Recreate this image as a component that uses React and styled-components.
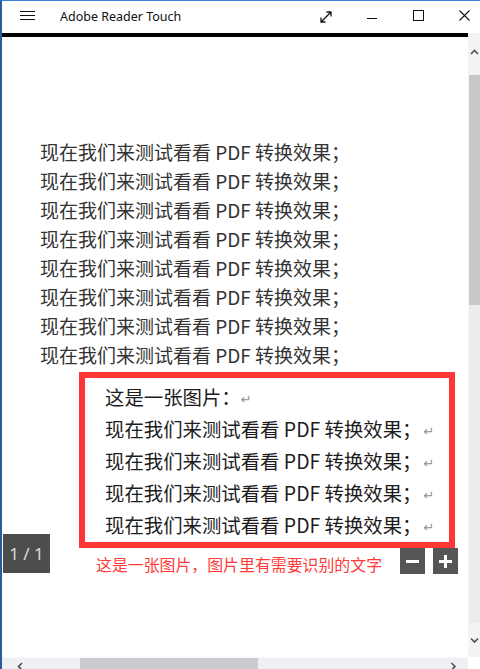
import React from 'react';
import styled, { createGlobalStyle } from 'styled-components';

const GlobalStyle = createGlobalStyle`
  html, body {
    margin: 0;
    padding: 0;
    background: #fff;
  }
  * {
    box-sizing: border-box;
  }
`;

const Window = styled.div`
  width: 480px;
  height: 669px;
  border-left: 2px solid #2b5a9e;
  border-top: 1px solid #3b7fd4;
  display: flex;
  flex-direction: column;
  overflow: hidden;
  background: #fff;
`;

const TitleBar = styled.div`
  height: 32px;
  display: flex;
  align-items: center;
  overflow: hidden;
  flex-shrink: 0;
`;

const MenuButton = styled.div`
  width: 46px;
  height: 32px;
  display: flex;
  align-items: center;
  justify-content: center;
  padding-left: 4px;
  padding-bottom: 2px;
`;

const Title = styled.div`
  margin-left: 12px;
  font-family: 'Noto Sans', 'Open Sans', sans-serif;
  font-size: 12.5px;
  color: #111;
  flex: 1;
  padding-bottom: 2px;
`;

const Controls = styled.div`
  display: flex;
  margin-right: -7px;
`;

const CtrlButton = styled.div`
  width: 46px;
  height: 32px;
  display: flex;
  align-items: center;
  justify-content: center;
  padding-bottom: ${p => (p.$low ? '0' : '4px')};
`;

const BodyRow = styled.div`
  flex: 1;
  display: flex;
  min-height: 0;
`;

const Viewport = styled.div`
  flex: 1;
  border-top: 4px solid #000;
  position: relative;
  overflow: hidden;
  background: #fff;
`;

const Page = styled.div`
  padding: 100px 0 0 38px;
`;

const TextLine = styled.div`
  font-family: 'Noto Sans CJK SC', sans-serif;
  font-size: 19px;
  line-height: 29px;
  color: #333;
  white-space: nowrap;
`;

const Figure = styled.div`
  margin: 3px 0 0 39px;
  width: 376px;
  height: 176px;
  border: 6px solid #ff3636;
  padding: 4px 0 0 20px;
  background: #fff;
`;

const FigureLine = styled.div`
  font-family: 'Noto Sans CJK SC', sans-serif;
  font-size: 19.4px;
  line-height: 29px;
  color: #1c1c1c;
  white-space: nowrap;
`;

const ReturnMark = styled.span`
  color: #909090;
  font-family: 'DejaVu Sans', sans-serif;
  font-size: 13px;
  margin-left: ${p => (p.$wide ? '0' : '2px')};
  vertical-align: 1px;
`;

const Caption = styled.div`
  margin: 7px 0 0 56px;
  font-family: 'Noto Sans CJK SC', sans-serif;
  font-size: 15.9px;
  line-height: 20px;
  color: #ff3a3a;
  white-space: nowrap;
`;

const PageBadge = styled.div`
  position: absolute;
  left: 1px;
  top: 497px;
  width: 47px;
  height: 39px;
  background: #4d4d4d;
  color: #dcdcdc;
  font-family: 'Noto Sans', sans-serif;
  font-size: 17px;
  display: flex;
  align-items: center;
  justify-content: center;
`;

const ZoomControls = styled.div`
  position: absolute;
  left: 398px;
  top: 511px;
  display: flex;
  gap: 8px;
`;

const ZoomButton = styled.div`
  width: 25px;
  height: 26px;
  background: #555;
  display: flex;
  align-items: center;
  justify-content: center;
`;

const VScroll = styled.div`
  width: 12px;
  display: flex;
  flex-direction: column;
  background: #ececec;
  border-left: 1px solid #f6f6f6;
`;

const VArrow = styled.div`
  height: ${p => p.$h}px;
  background: #f3f3f3;
  display: flex;
  justify-content: center;
  align-items: ${p => (p.$top ? 'flex-start' : 'center')};
  padding-top: ${p => (p.$top ? '16px' : '0')};
`;

const VThumb = styled.div`
  height: 230px;
  background: #c8c8c8;
`;

const Track = styled.div`
  flex: 1;
`;

const HScrollRow = styled.div`
  height: 12px;
  display: flex;
  flex-shrink: 0;
`;

const HScroll = styled.div`
  flex: 1;
  display: flex;
  background: #eef0f3;
  border-top: 1px solid #f8f8f8;
`;

const HArrow = styled.div`
  width: ${p => p.$w}px;
  display: flex;
  justify-content: center;
  padding-top: 4px;
`;

const HGap = styled.div`
  width: ${p => p.$w}px;
`;

const HThumb = styled.div`
  width: 178px;
  background: #c9cbcf;
`;

const Corner = styled.div`
  width: 12px;
  background: #fff;
`;

const line = '现在我们来测试看看 PDF 转换效果；';

const Chevron = ({ dir }) => {
  const paths = {
    up: 'M1 5 L4.5 1.5 L8 5',
    down: 'M1 1.5 L4.5 5 L8 1.5',
    left: 'M5 1 L1.5 4.5 L5 8',
    right: 'M1.5 1 L5 4.5 L1.5 8'
  };
  const horiz = dir === 'left' || dir === 'right';
  return (
    <svg width={horiz ? 7 : 9} height={horiz ? 9 : 7} viewBox={horiz ? '0 0 7 9' : '0 0 9 7'}>
      <path d={paths[dir]} fill='none' stroke='#505050' strokeWidth='1.6' />
    </svg>
  );
};

const App = () => {
  return (
    <>
      <GlobalStyle />
      <Window>
        <TitleBar>
          <MenuButton>
            <svg width='15' height='10' viewBox='0 0 15 10'>
              <path d='M0 0.5 H15 M0 4.5 H15 M0 8.5 H15' stroke='#111' strokeWidth='1' />
            </svg>
          </MenuButton>
          <Title>Adobe Reader Touch</Title>
          <Controls>
            <CtrlButton $low>
              <svg width='12' height='12' viewBox='0 0 12 12'>
                <path
                  d='M1 11 L11 1 M6.5 1 H11 V5.5 M1 6.5 V11 H5.5'
                  fill='none'
                  stroke='#111'
                  strokeWidth='1.3'
                />
              </svg>
            </CtrlButton>
            <CtrlButton $low>
              <svg width='10' height='6' viewBox='0 0 10 6'>
                <path d='M0 4.5 H10' stroke='#111' strokeWidth='1' />
              </svg>
            </CtrlButton>
            <CtrlButton>
              <svg width='11' height='11' viewBox='0 0 11 11'>
                <rect x='0.5' y='0.5' width='10' height='10' fill='none' stroke='#111' strokeWidth='1' />
              </svg>
            </CtrlButton>
            <CtrlButton>
              <svg width='11' height='11' viewBox='0 0 11 11'>
                <path d='M0.5 0.5 L10.5 10.5 M10.5 0.5 L0.5 10.5' stroke='#111' strokeWidth='1.1' />
              </svg>
            </CtrlButton>
          </Controls>
        </TitleBar>

        <BodyRow>
          <Viewport>
            <Page>
              {Array.from({ length: 8 }).map((_, i) => (
                <TextLine key={i}>{line}</TextLine>
              ))}
              <Figure>
                <FigureLine>
                  这是一张图片：<ReturnMark $wide>↵</ReturnMark>
                </FigureLine>
                {Array.from({ length: 4 }).map((_, i) => (
                  <FigureLine key={i}>
                    {line}
                    <ReturnMark>↵</ReturnMark>
                  </FigureLine>
                ))}
              </Figure>
              <Caption>这是一张图片，图片里有需要识别的文字</Caption>
            </Page>

            <PageBadge>1 / 1</PageBadge>
            <ZoomControls>
              <ZoomButton>
                <svg width='13' height='13' viewBox='0 0 13 13'>
                  <path d='M0 6.5 H13' stroke='#fff' strokeWidth='3' />
                </svg>
              </ZoomButton>
              <ZoomButton>
                <svg width='13' height='13' viewBox='0 0 13 13'>
                  <path d='M0 6.5 H13 M6.5 0 V13' stroke='#fff' strokeWidth='3' />
                </svg>
              </ZoomButton>
            </ZoomControls>
          </Viewport>

          <VScroll>
            <VArrow $h={42} $top>
              <Chevron dir='up' />
            </VArrow>
            <VThumb />
            <Track />
            <VArrow $h={34}>
              <Chevron dir='down' />
            </VArrow>
          </VScroll>
        </BodyRow>

        <HScrollRow>
          <HScroll>
            <HArrow $w={36}>
              <Chevron dir='left' />
            </HArrow>
            <HGap $w={42} />
            <HThumb />
            <Track />
            <HArrow $w={30}>
              <Chevron dir='right' />
            </HArrow>
          </HScroll>
          <Corner />
        </HScrollRow>
      </Window>
    </>
  );
};

export default App;
